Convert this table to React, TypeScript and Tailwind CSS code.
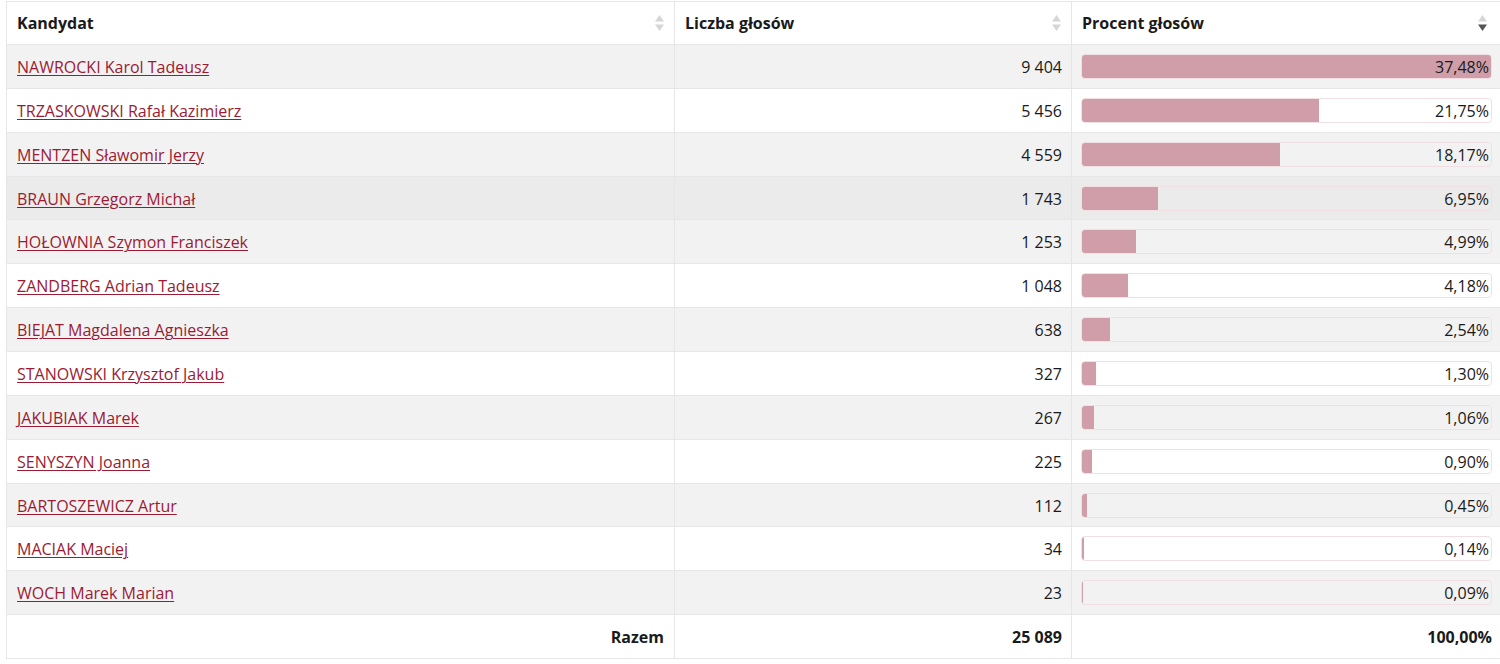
const rows: [string, string, number][] = [
  ["NAWROCKI Karol Tadeusz", "9 404", 37.48],
  ["TRZASKOWSKI Rafał Kazimierz", "5 456", 21.75],
  ["MENTZEN Sławomir Jerzy", "4 559", 18.17],
  ["BRAUN Grzegorz Michał", "1 743", 6.95],
  ["HOŁOWNIA Szymon Franciszek", "1 253", 4.99],
  ["ZANDBERG Adrian Tadeusz", "1 048", 4.18],
  ["BIEJAT Magdalena Agnieszka", "638", 2.54],
  ["STANOWSKI Krzysztof Jakub", "327", 1.3],
  ["JAKUBIAK Marek", "267", 1.06],
  ["SENYSZYN Joanna", "225", 0.9],
  ["BARTOSZEWICZ Artur", "112", 0.45],
  ["MACIAK Maciej", "34", 0.14],
  ["WOCH Marek Marian", "23", 0.09],
];

const max = 37.48;

function SortIcon({ active }: { active?: boolean }) {
  return (
    <svg width="9" height="16" viewBox="0 0 9 16" className="shrink-0">
      <path d="M4.5 0 L9 6.5 H0 Z" fill="#d6d6d6" />
      <path d="M0 9.5 H9 L4.5 16 Z" fill={active ? "#555555" : "#d6d6d6"} />
    </svg>
  );
}

function pct(v: number) {
  return v.toFixed(2).replace(".", ",") + "%";
}

export default function App() {
  return (
    <div className="w-[1500px] h-[664px] overflow-hidden bg-white pl-[6px] pt-px font-['Open_Sans',sans-serif] text-[16px] text-[#1a1a1a]">
      <table className="w-[1497px] border-collapse table-fixed">
        <colgroup>
          <col className="w-[668px]" />
          <col className="w-[397px]" />
          <col />
        </colgroup>
        <thead>
          <tr className="h-[43px] bg-white">
            <th className="border border-[#e6e6e6] px-[10px] text-left font-bold">
              <div className="flex items-center justify-between">
                <span>Kandydat</span>
                <SortIcon />
              </div>
            </th>
            <th className="border border-[#e6e6e6] px-[10px] text-left font-bold">
              <div className="flex items-center justify-between">
                <span>Liczba głosów</span>
                <SortIcon />
              </div>
            </th>
            <th className="border border-[#e6e6e6] px-[10px] text-left font-bold">
              <div className="flex items-center justify-between pr-[5px]">
                <span>Procent głosów</span>
                <SortIcon active />
              </div>
            </th>
          </tr>
        </thead>
        <tbody>
          {rows.map(([name, votes, p], i) => (
            <tr
              key={name}
              className={
                "h-[43.86px] " +
                (i === 3 ? "bg-[#ebebeb]" : i % 2 === 0 ? "bg-[#f2f2f2]" : "bg-white")
              }
            >
              <td className="border border-[#e6e6e6] px-[10px] pt-px">
                <a href="#" className="text-[#9b1b33] underline decoration-1 underline-offset-2">
                  {name}
                </a>
              </td>
              <td className="border border-[#e6e6e6] pl-[10px] pr-[9px] pt-px text-right">{votes}</td>
              <td className="border border-[#e6e6e6] pl-[9px] pr-[10px]">
                <div className="relative h-[25px] rounded-[4px] border border-[#f2dfe3] overflow-hidden">
                  <div
                    className="absolute left-0 top-0 bottom-0 bg-[#cf9ea9]"
                    style={{ width: `${(p / max) * 100}%` }}
                  />
                  <div className="relative flex h-full items-center justify-end pr-[2px] pt-px leading-none">
                    {pct(p)}
                  </div>
                </div>
              </td>
            </tr>
          ))}
          <tr className="h-[43.86px] bg-white font-bold">
            <td className="border border-[#e6e6e6] px-[10px] text-right">Razem</td>
            <td className="border border-[#e6e6e6] pl-[10px] pr-[9px] text-right">25 089</td>
            <td className="border border-[#e6e6e6] px-[10px] text-right">100,00%</td>
          </tr>
        </tbody>
      </table>
    </div>
  );
}
